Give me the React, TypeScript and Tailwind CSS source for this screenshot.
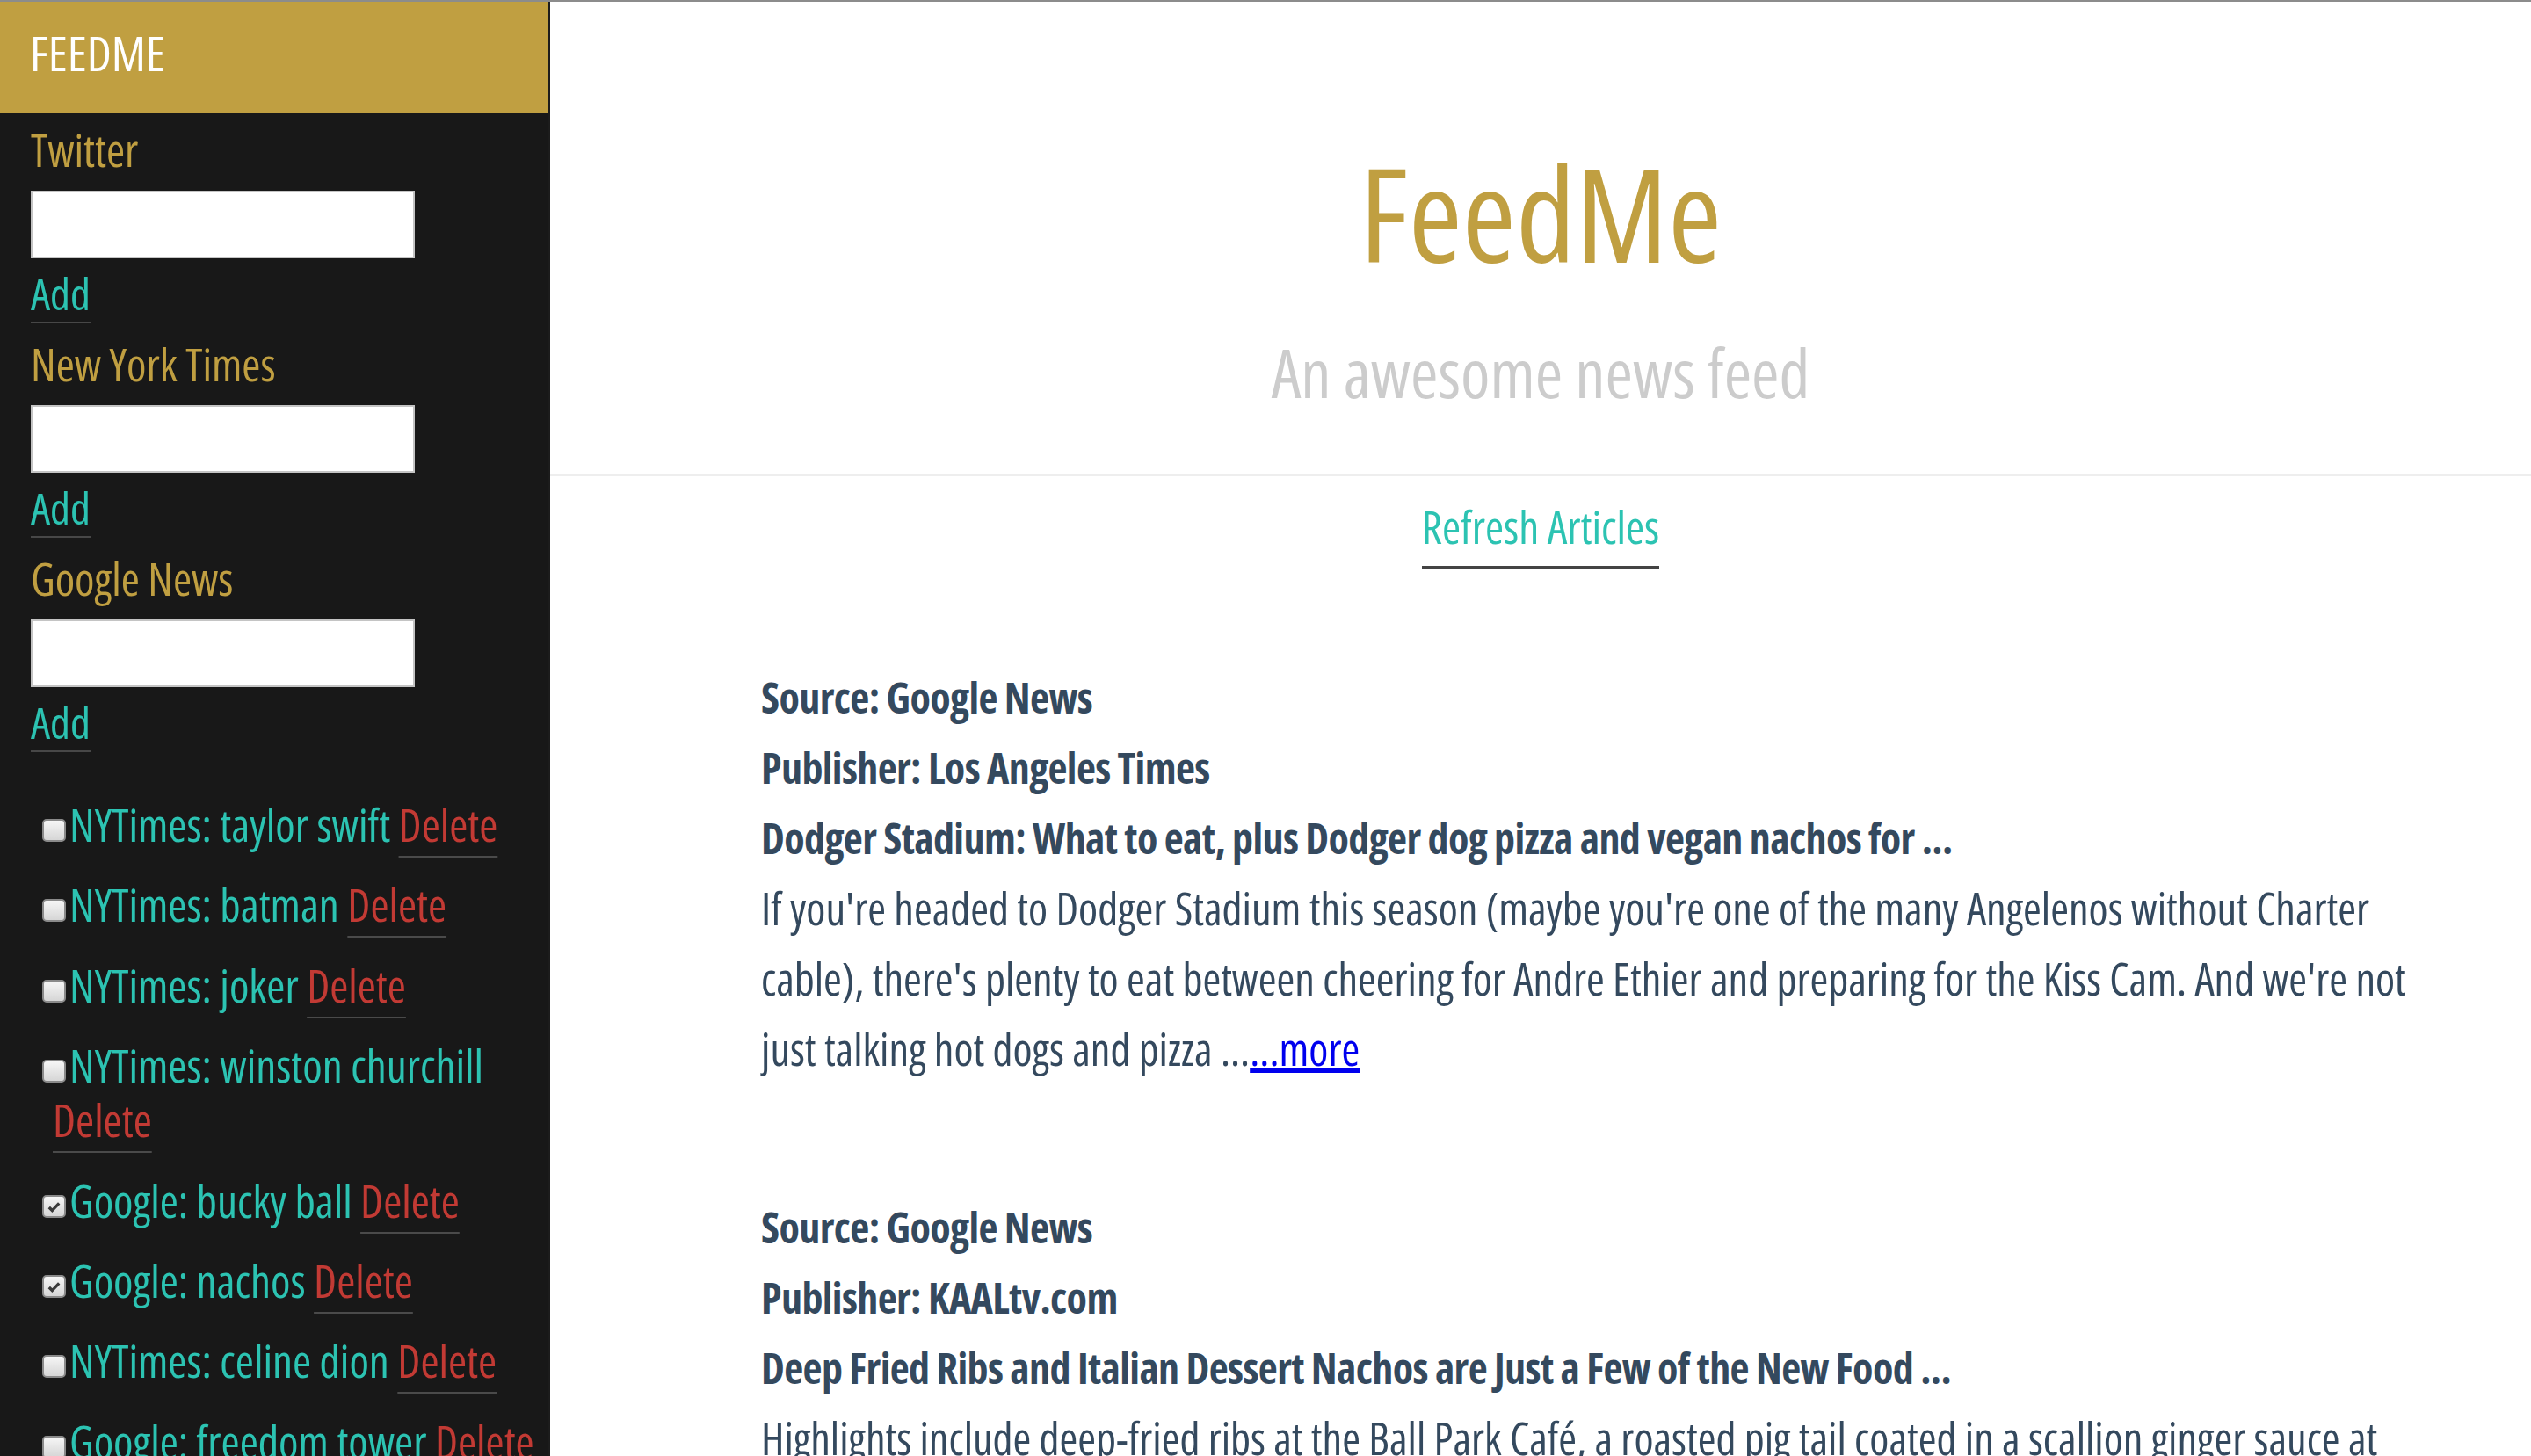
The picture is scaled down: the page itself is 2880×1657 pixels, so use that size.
import React from "react";

type Feed = { label: string; checked: boolean };

const feeds: Feed[] = [
  { label: "NYTimes: taylor swift", checked: false },
  { label: "NYTimes: batman", checked: false },
  { label: "NYTimes: joker", checked: false },
  { label: "NYTimes: winston churchill", checked: false },
  { label: "Google: bucky ball", checked: true },
  { label: "Google: nachos", checked: true },
  { label: "NYTimes: celine dion", checked: false },
  { label: "Google: freedom tower", checked: false },
  { label: "Twitter: dodgers", checked: false },
];

const sources = ["Twitter", "New York Times", "Google News"];

const Checkbox = ({ checked }: { checked: boolean }) => (
  <span className="relative ml-[-12px] mr-[4px] inline-block h-[26px] w-[27px] rounded-[5px] border-2 border-[#8a8a8a] bg-linear-to-b from-[#f6f6f6] to-[#d6d6d6]">
    {checked && (
      <svg viewBox="0 0 16 16" className="absolute inset-[2px]">
        <path d="M3.2 8.4l3 3 6.6-6.8" fill="none" stroke="#3a3a3a" strokeWidth="2.8" />
      </svg>
    )}
  </span>
);

export default function App() {
  return (
    <div className="flex h-[1657px] overflow-hidden border-t-2 border-[#8c8c8c] bg-white font-['Open_Sans',sans-serif] font-stretch-condensed">
      <aside className="w-[626px] shrink-0 border-r-2 border-[#1c1c1c] bg-[#181818]">
        <div className="h-[127px] bg-[#c09f41] pl-[34px] text-[55px] leading-[115px] text-white">FEEDME</div>
        {sources.map((source) => (
          <div key={source} className="flex h-[244px] flex-col items-start pl-[35px]">
            <div className="mt-[11px] text-[51px] leading-[60px] text-[#c09f41]">{source}</div>
            <input className="mt-[17px] h-[77px] w-[437px] border-2 border-[#c4c4c4] bg-white" />
            <a className="mt-[8px] border-b-2 border-[#474747] text-[50px] leading-[64px] text-[#2cc3b2]">Add</a>
          </div>
        ))}
        <ul className="mt-[46px]">
          {feeds.map((feed) => (
            <li key={feed.label} className="mb-[29.4px] pl-[60px] text-[51px] leading-[62px] text-[#2cc3b2]">
              <Checkbox checked={feed.checked} />
              {feed.label}{" "}
              <a className="text-[#c23a34] underline decoration-[#4a4a4a] decoration-2 underline-offset-[16px]">
                Delete
              </a>
            </li>
          ))}
        </ul>
      </aside>
      <main className="min-w-0 flex-1">
        <header className="h-[540px] border-b-2 border-[#eeeeee] pt-[166px] text-center">
          <h1 className="text-[148px] leading-[148px] text-[#c09f41]">FeedMe</h1>
          <p className="mt-[70px] text-[76px] leading-[76px] text-[#cccccc]">An awesome news feed</p>
        </header>
        <div className="pt-[12px] text-center">
          <a className="inline-block border-b-[3px] border-[#444] text-[51px] leading-[90px] text-[#2cc3b2]">
            Refresh Articles
          </a>
        </div>
        <div className="mt-[107px] pl-[240px] pr-[110px] text-[#34495e]">
          <article className="mb-[123px]">
            <p className="text-[48px] leading-[80px] font-bold tracking-[-0.6px]">Source: Google News</p>
            <p className="text-[48px] leading-[80px] font-bold tracking-[-0.6px]">Publisher: Los Angeles Times</p>
            <p className="text-[48px] leading-[80px] font-bold tracking-[-0.6px]">
              Dodger Stadium: What to eat, plus Dodger dog pizza and vegan nachos for ...
            </p>
            <p className="text-[50.2px] leading-[80px]">
              If you're headed to Dodger Stadium this season (maybe you're one of the many Angelenos without Charter
              cable), there's plenty to eat between cheering for Andre Ethier and preparing for the Kiss Cam. And we're
              not just talking hot dogs and pizza ...<a className="text-[#0000ee] underline">...more</a>
            </p>
          </article>
          <article>
            <p className="text-[48px] leading-[80px] font-bold tracking-[-0.6px]">Source: Google News</p>
            <p className="text-[48px] leading-[80px] font-bold tracking-[-0.6px]">Publisher: KAALtv.com</p>
            <p className="text-[48px] leading-[80px] font-bold tracking-[-0.6px]">
              Deep Fried Ribs and Italian Dessert Nachos are Just a Few of the New Food ...
            </p>
            <p className="text-[50.2px] leading-[80px]">
              Highlights include deep-fried ribs at the Ball Park Café, a roasted pig tail coated in a scallion ginger
              sauce at the Pig Tail stand, and Italian dessert nachos ...<a className="text-[#0000ee] underline">...more</a>
            </p>
          </article>
        </div>
      </main>
    </div>
  );
}
